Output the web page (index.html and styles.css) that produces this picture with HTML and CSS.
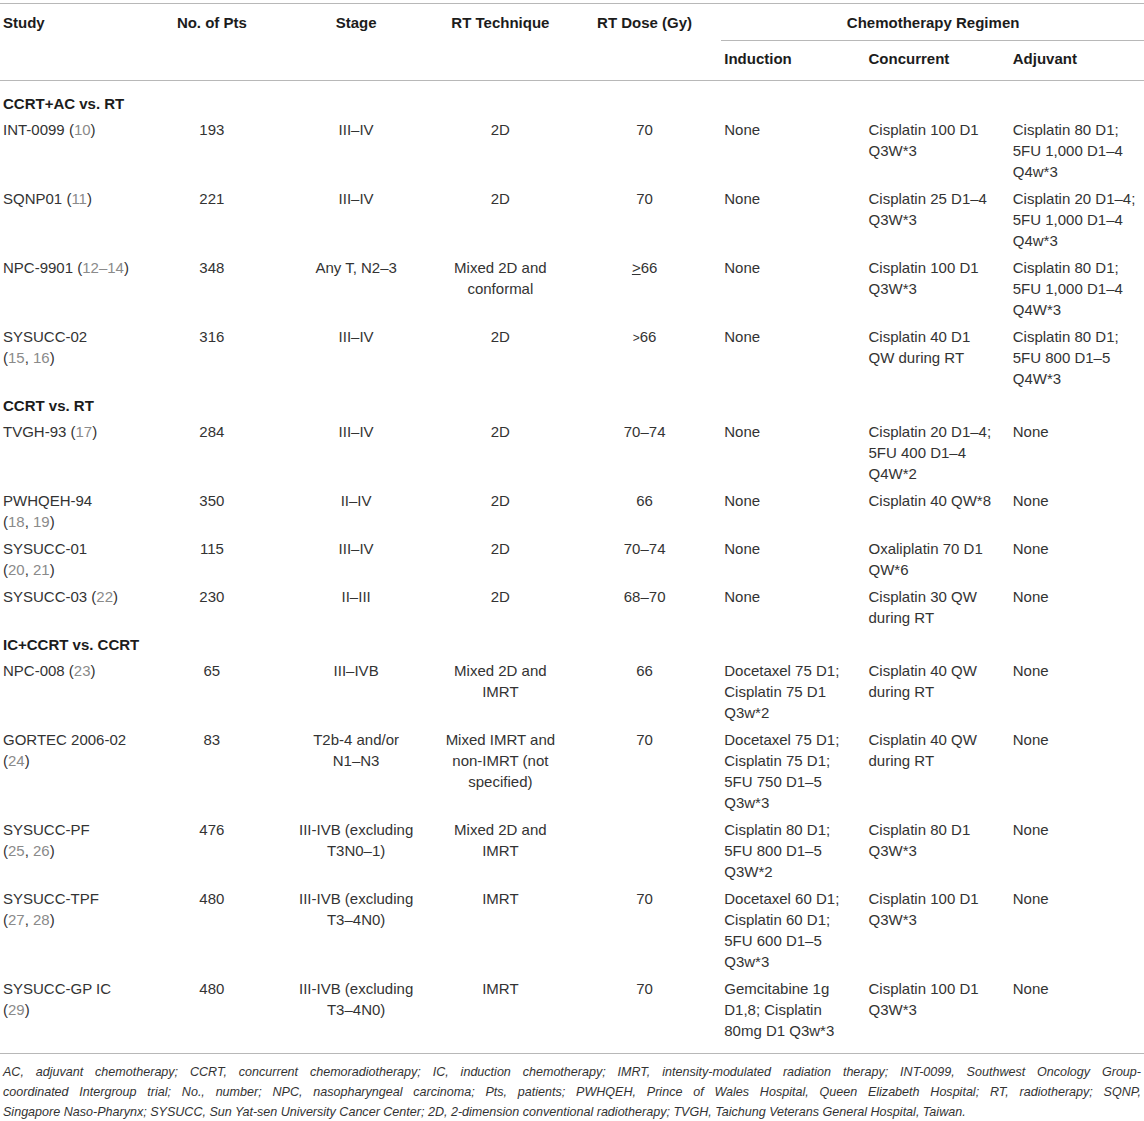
FILE: index.html
```html
<!DOCTYPE html>
<html lang="en">
<head>
<meta charset="utf-8">
<title>Chemotherapy trials in NPC</title>
<link rel="stylesheet" href="styles.css">
</head>
<body>
<div class="table-wrap">
<table class="trials">
  <colgroup>
    <col class="c"><col class="c"><col class="c"><col class="c"><col class="c"><col class="c"><col class="c"><col class="c">
  </colgroup>
  <thead>
    <tr class="h1">
      <th rowspan="2" class="left">Study</th>
      <th rowspan="2">No. of Pts</th>
      <th rowspan="2">Stage</th>
      <th rowspan="2">RT Technique</th>
      <th rowspan="2">RT Dose (Gy)</th>
      <th colspan="3" class="group">Chemotherapy Regimen</th>
    </tr>
    <tr class="h2">
      <th class="left">Induction</th>
      <th class="left">Concurrent</th>
      <th class="left">Adjuvant</th>
    </tr>
  </thead>
  <tbody>
    <tr class="section first"><td colspan="8">CCRT+AC vs. RT</td></tr>
    <tr>
      <td>INT-0099 <span class="cite">(<span class="ref">10</span>)</span></td><td class="ctr">193</td><td class="ctr">III–IV</td><td class="ctr">2D</td><td class="ctr">70</td>
      <td>None</td><td>Cisplatin 100 D1 Q3W*3</td><td>Cisplatin 80 D1; 5FU 1,000 D1–4 Q4w*3</td>
    </tr>
    <tr>
      <td>SQNP01 <span class="cite">(<span class="ref">11</span>)</span></td><td class="ctr">221</td><td class="ctr">III–IV</td><td class="ctr">2D</td><td class="ctr">70</td>
      <td>None</td><td>Cisplatin 25 D1–4 Q3W*3</td><td>Cisplatin 20 D1–4; 5FU 1,000 D1–4 Q4w*3</td>
    </tr>
    <tr>
      <td>NPC-9901 <span class="cite">(<span class="ref">12–14</span>)</span></td><td class="ctr">348</td><td class="ctr">Any T, N2–3</td><td class="ctr">Mixed 2D and conformal</td><td class="ctr"><span class="ul">&gt;</span>66</td>
      <td>None</td><td>Cisplatin 100 D1 Q3W*3</td><td>Cisplatin 80 D1; 5FU 1,000 D1–4 Q4W*3</td>
    </tr>
    <tr>
      <td>SYSUCC-02 <span class="cite">(<span class="ref">15</span>, <span class="ref">16</span>)</span></td><td class="ctr">316</td><td class="ctr">III–IV</td><td class="ctr">2D</td><td class="ctr"><span class="small">&gt;</span>66</td>
      <td>None</td><td>Cisplatin 40 D1 QW during RT</td><td>Cisplatin 80 D1; 5FU 800 D1–5 Q4W*3</td>
    </tr>
    <tr class="section"><td colspan="8">CCRT vs. RT</td></tr>
    <tr>
      <td>TVGH-93 <span class="cite">(<span class="ref">17</span>)</span></td><td class="ctr">284</td><td class="ctr">III–IV</td><td class="ctr">2D</td><td class="ctr">70–74</td>
      <td>None</td><td>Cisplatin 20 D1–4; 5FU 400 D1–4 Q4W*2</td><td>None</td>
    </tr>
    <tr>
      <td>PWHQEH-94 <span class="cite">(<span class="ref">18</span>, <span class="ref">19</span>)</span></td><td class="ctr">350</td><td class="ctr">II–IV</td><td class="ctr">2D</td><td class="ctr">66</td>
      <td>None</td><td>Cisplatin 40 QW*8</td><td>None</td>
    </tr>
    <tr>
      <td>SYSUCC-01 <span class="cite">(<span class="ref">20</span>, <span class="ref">21</span>)</span></td><td class="ctr">115</td><td class="ctr">III–IV</td><td class="ctr">2D</td><td class="ctr">70–74</td>
      <td>None</td><td>Oxaliplatin 70 D1 QW*6</td><td>None</td>
    </tr>
    <tr>
      <td>SYSUCC-03 <span class="cite">(<span class="ref">22</span>)</span></td><td class="ctr">230</td><td class="ctr">II–III</td><td class="ctr">2D</td><td class="ctr">68–70</td>
      <td>None</td><td>Cisplatin 30 QW during RT</td><td>None</td>
    </tr>
    <tr class="section"><td colspan="8">IC+CCRT vs. CCRT</td></tr>
    <tr>
      <td>NPC-008 <span class="cite">(<span class="ref">23</span>)</span></td><td class="ctr">65</td><td class="ctr">III–IVB</td><td class="ctr">Mixed 2D and IMRT</td><td class="ctr">66</td>
      <td>Docetaxel 75 D1; Cisplatin 75 D1 Q3w*2</td><td>Cisplatin 40 QW during RT</td><td>None</td>
    </tr>
    <tr>
      <td>GORTEC 2006-02 <span class="cite">(<span class="ref">24</span>)</span></td><td class="ctr">83</td><td class="ctr">T2b-4 and/or <span class="nw">N1–N3</span></td><td class="ctr">Mixed IMRT and non-IMRT (not specified)</td><td class="ctr">70</td>
      <td>Docetaxel 75 D1; Cisplatin 75 D1; 5FU 750 D1–5 Q3w*3</td><td>Cisplatin 40 QW during RT</td><td>None</td>
    </tr>
    <tr>
      <td>SYSUCC-PF <span class="cite">(<span class="ref">25</span>, <span class="ref">26</span>)</span></td><td class="ctr">476</td><td class="ctr">III-IVB (excluding T3N0–1)</td><td class="ctr">Mixed 2D and IMRT</td><td class="ctr"></td>
      <td>Cisplatin 80 D1; 5FU 800 D1–5 Q3W*2</td><td>Cisplatin 80 D1 Q3W*3</td><td>None</td>
    </tr>
    <tr>
      <td>SYSUCC-TPF <span class="cite">(<span class="ref">27</span>, <span class="ref">28</span>)</span></td><td class="ctr">480</td><td class="ctr">III-IVB (excluding T3–4N0)</td><td class="ctr">IMRT</td><td class="ctr">70</td>
      <td>Docetaxel 60 D1; Cisplatin 60 D1; 5FU 600 D1–5 Q3w*3</td><td>Cisplatin 100 D1 Q3W*3</td><td>None</td>
    </tr>
    <tr>
      <td>SYSUCC-GP IC <span class="cite">(<span class="ref">29</span>)</span></td><td class="ctr">480</td><td class="ctr">III-IVB (excluding T3–4N0)</td><td class="ctr">IMRT</td><td class="ctr">70</td>
      <td>Gemcitabine 1g D1,8; Cisplatin 80mg D1 Q3w*3</td><td>Cisplatin 100 D1 Q3W*3</td><td>None</td>
    </tr>
  </tbody>
</table>
</div>
<div class="footnote">
  <span class="fline">AC, adjuvant chemotherapy; CCRT, concurrent chemoradiotherapy; IC, induction chemotherapy; IMRT, intensity-modulated radiation therapy; INT-0099, Southwest Oncology Group-</span>
  <span class="fline">coordinated Intergroup trial; No., number; NPC, nasopharyngeal carcinoma; Pts, patients; PWHQEH, Prince of Wales Hospital, Queen Elizabeth Hospital; RT, radiotherapy; SQNP,</span>
  <span class="fline last">Singapore Naso-Pharynx; SYSUCC, Sun Yat-sen University Cancer Center; 2D, 2-dimension conventional radiotherapy; TVGH, Taichung Veterans General Hospital, Taiwan.</span>
</div>
</body>
</html>
```

FILE: styles.css
```css
html, body {
  margin: 0;
  padding: 0;
  background: #ffffff;
}

body {
  font-family: "Liberation Sans", Arial, sans-serif;
  color: #333333;
  width: 1144px;
  overflow: hidden;
}

.table-wrap {
  overflow: hidden;
  padding-top: 3px;
}

.trials {
  width: 1154px;
  table-layout: fixed;
  border-collapse: collapse;
  font-size: 15px;
  line-height: 21px;
}

.trials col.c {
  width: 144.25px;
}

.trials th,
.trials td {
  padding: 3px 12px 3px 3px;
  vertical-align: top;
  text-align: left;
  font-weight: normal;
}

.trials thead tr.h1 th {
  border-top: 1px solid #b8b8b8;
}

.trials thead th {
  font-weight: bold;
  color: #1c1c1c;
  text-align: center;
  border-bottom: 1px solid #b8b8b8;
}

.trials thead th.left {
  text-align: left;
}

.trials thead tr.h1 th {
  padding-top: 8px;
  padding-bottom: 7px;
}

.trials thead tr.h1 th.group {
  text-align: center;
}

.trials thead tr.h2 th {
  padding-top: 7px;
  padding-bottom: 11px;
}

.trials td.ctr {
  text-align: center;
}

.trials tr.section td {
  font-weight: bold;
  color: #1c1c1c;
  padding-top: 3px;
  padding-bottom: 2px;
}

.trials tr.section.first td {
  padding-top: 12px;
  padding-bottom: 2px;
}

.cite,
.nw {
  white-space: nowrap;
}

.ref {
  color: #8a8a8a;
}

.ul {
  text-decoration: underline;
  text-underline-offset: 1px;
}

.small {
  font-size: 12px;
}

.footnote {
  margin: 9px 0 0 0;
  padding: 8px 3px 0 3px;
  border-top: 1px solid #b8b8b8;
  font-size: 12.55px;
  line-height: 20px;
  font-style: italic;
  color: #333333;
}

.fline {
  display: block;
  text-align: justify;
  text-align-last: justify;
}

.fline.last {
  text-align: left;
  text-align-last: left;
}
```
